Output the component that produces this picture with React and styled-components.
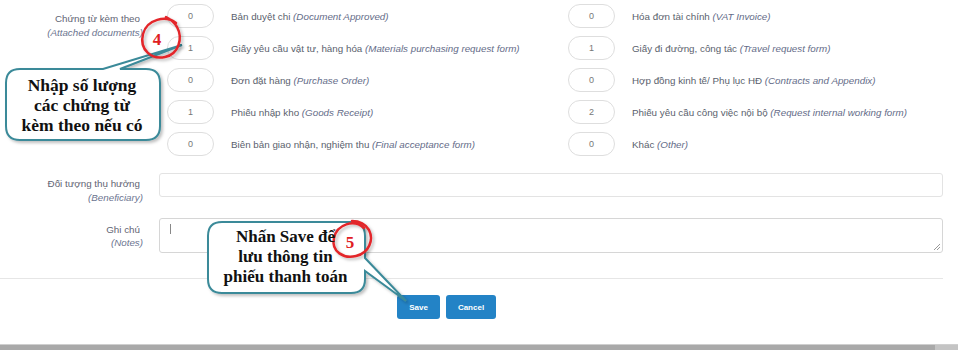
import React from "react";
import styled, { createGlobalStyle } from "styled-components";

const Global = createGlobalStyle`
  html, body { margin: 0; padding: 0; background: #fff; }
  body { font-family: "Liberation Sans", Arial, sans-serif; }
  * { box-sizing: border-box; }
`;

const Page = styled.div`
  position: relative;
  width: 958px;
  height: 350px;
  overflow: hidden;
  background: #fff;
`;

const Form = styled.div`
  padding: 4px 15px 0 0;
`;

const Row = styled.div`
  display: grid;
  grid-template-columns: 143px 1fr;
  column-gap: ${(p) => p.$gap || 16}px;
  margin-top: ${(p) => p.$top || 0}px;
  align-items: start;
`;

const FieldLabel = styled.div`
  text-align: right;
  font-size: 9.8px;
  line-height: ${(p) => p.$lh || 14}px;
  padding-top: ${(p) => p.$pt || 0}px;
  color: #5f6473;
  white-space: nowrap;
`;

const LabelMain = styled.div`
  padding-right: 3px;
`;

const LabelEn = styled.div`
  font-style: italic;
  color: #6c7590;
`;

const ItemsGrid = styled.div`
  display: grid;
  grid-template-columns: 401px 1fr;
  row-gap: 8px;
`;

const Item = styled.div`
  display: flex;
  align-items: center;
  gap: 17px;
`;

const Count = styled.input`
  width: 47px;
  height: 24px;
  border: 1px solid #dedede;
  border-radius: 12px;
  text-align: center;
  font-family: "Liberation Sans", Arial, sans-serif;
  font-size: 9px;
  color: #777;
  background: #fff;
  padding: 0;
  outline: none;
`;

const ItemText = styled.span`
  font-size: 9.8px;
  color: #5a5f6d;
  white-space: nowrap;
`;

const Em = styled.i`
  color: #646c88;
`;

const TextInput = styled.input`
  height: 24px;
  width: 100%;
  border: 1px solid #e3e3e3;
  border-radius: 3px;
  background: #fff;
  outline: none;
`;

const NotesBox = styled.div`
  position: relative;
  height: 35px;
  border: 1px solid #d6d6d6;
  border-radius: 3px;
  background: #fff;
  &::before {
    content: "";
    position: absolute;
    left: 10px;
    top: 5px;
    width: 1px;
    height: 10px;
    background: #888;
  }
  &::after {
    content: "";
    position: absolute;
    right: 2px;
    bottom: 2px;
    width: 6px;
    height: 6px;
    background: linear-gradient(135deg, transparent 45%, #999 45%, #999 55%, transparent 55%, transparent 70%, #999 70%, #999 80%, transparent 80%);
  }
`;

const Divider = styled.div`
  margin-top: 25px;
  width: 943px;
  border-top: 1px solid #e6e6e6;
`;

const Actions = styled.div`
  display: flex;
  gap: 6px;
  padding-left: 397px;
  margin-top: 16px;
`;

const Button = styled.button`
  width: ${(p) => p.$w}px;
  height: 24px;
  border: none;
  border-radius: 3px;
  background: #2383c6;
  color: #fff;
  font-family: "Liberation Sans", Arial, sans-serif;
  font-size: 8px;
  font-weight: bold;
  padding: 0;
`;

const BottomBar = styled.div`
  margin-top: 25px;
  height: 8px;
  background: linear-gradient(to right, #a9a9a9 0, #a9a9a9 935px, #c4c4c4 935px);
  border-top: 1px solid #cfcfcf;
`;

const Overlay = styled.svg`
  position: absolute;
  left: 0;
  top: 0;
  pointer-events: none;
`;

const CalloutText = styled.div`
  position: absolute;
  left: ${(p) => p.$x}px;
  top: ${(p) => p.$y}px;
  width: ${(p) => p.$w}px;
  text-align: center;
  font-family: "Liberation Serif", "Times New Roman", serif;
  font-weight: bold;
  font-size: ${(p) => p.$fs}px;
  line-height: 20px;
  color: #111;
  white-space: nowrap;
`;

const StepNum = styled.div`
  position: absolute;
  left: ${(p) => p.$x}px;
  top: ${(p) => p.$y}px;
  width: 20px;
  text-align: center;
  font-family: "Liberation Serif", "Times New Roman", serif;
  font-weight: bold;
  font-size: 17px;
  line-height: 18px;
  color: #e0201f;
`;

const items = [
  ["0", "Bản duyệt chi ", "(Document Approved)"],
  ["0", "Hóa đơn tài chính ", "(VAT Invoice)"],
  ["1", "Giấy yêu cầu vật tư, hàng hóa ", "(Materials purchasing request form)"],
  ["1", "Giấy đi đường, công tác ", "(Travel request form)"],
  ["0", "Đơn đặt hàng ", "(Purchase Order)"],
  ["0", "Hợp đồng kinh tế/ Phụ lục HĐ ", "(Contracts and Appendix)"],
  ["1", "Phiếu nhập kho ", "(Goods Receipt)"],
  ["2", "Phiếu yêu cầu công việc nội bộ ", "(Request internal working form)"],
  ["0", "Biên bản giao nhận, nghiệm thu ", "(Final acceptance form)"],
  ["0", "Khác ", "(Other)"],
];

export default function App() {
  return (
    <Page>
      <Global />
      <Form>
        <Row $gap={24}>
          <FieldLabel $pt={8}>
            <LabelMain>Chứng từ kèm theo</LabelMain>
            <LabelEn>(Attached documents)</LabelEn>
          </FieldLabel>
          <ItemsGrid>
            {items.map(([v, vi, en], i) => (
              <Item key={i}>
                <Count readOnly value={v} />
                <ItemText>
                  {vi}
                  <Em>{en}</Em>
                </ItemText>
              </Item>
            ))}
          </ItemsGrid>
        </Row>
        <Row $top={17}>
          <FieldLabel $pt={4}>
            <LabelMain>Đối tượng thụ hưởng</LabelMain>
            <LabelEn>(Beneficiary)</LabelEn>
          </FieldLabel>
          <TextInput readOnly />
        </Row>
        <Row $top={13}>
          <FieldLabel $pt={5} $lh={13}>
            <LabelMain>Ghi chú</LabelMain>
            <LabelEn>(Notes)</LabelEn>
          </FieldLabel>
          <NotesBox />
        </Row>
      </Form>
      <Divider />
      <Actions>
        <Button $w={43}>Save</Button>
        <Button $w={50}>Cancel</Button>
      </Actions>
      <BottomBar />

      <Overlay width="958" height="350" viewBox="0 0 958 350">
        <defs>
          <filter id="sh" x="-20%" y="-20%" width="150%" height="150%">
            <feDropShadow dx="2" dy="2" stdDeviation="1.5" floodColor="#000" floodOpacity="0.25" />
          </filter>
        </defs>
        <path
          d="M 20 69 L 103 69 L 182 45 L 120 69 L 146 69 Q 160 69 160 83 L 160 126 Q 160 140 146 140 L 20 140 Q 6 140 6 126 L 6 83 Q 6 69 20 69 Z"
          fill="#fff"
          stroke="#3b8a99"
          strokeWidth="2"
          filter="url(#sh)"
        />
        <path
          d="M 222 222 L 351 222 Q 365 222 365 236 L 365 258 L 406 301 L 365 271 L 365 279 Q 365 293 351 293 L 222 293 Q 208 293 208 279 L 208 236 Q 208 222 222 222 Z"
          fill="#fff"
          stroke="#3b8a99"
          strokeWidth="2"
          filter="url(#sh)"
        />
        <path
          d="M 176 23 C 166 15, 147 19, 143 34 C 139 50, 152 60, 165 57 C 179 54, 183 38, 177 27 C 174 22, 170 19, 166 17"
          fill="none"
          stroke="#e3262a"
          strokeWidth="2.5"
          strokeLinecap="round"
          filter="url(#sh)"
        />
        <path
          d="M 364 228 C 354 219, 337 224, 334 238 C 331 252, 344 259, 356 256 C 369 253, 374 240, 369 230 C 366 225, 360 221, 352 221"
          fill="none"
          stroke="#e3262a"
          strokeWidth="2.5"
          strokeLinecap="round"
          filter="url(#sh)"
        />
      </Overlay>
      <CalloutText $x={5} $y={75} $w={154} $fs={17.5}>
        Nhập số lượng
        <br />
        các chứng từ
        <br />
        kèm theo nếu có
      </CalloutText>
      <CalloutText $x={207} $y={227} $w={157} $fs={17}>
        Nhấn Save để
        <br />
        lưu thông tin
        <br />
        phiếu thanh toán
      </CalloutText>
      <StepNum $x={147} $y={31}>4</StepNum>
      <StepNum $x={340} $y={234}>5</StepNum>
    </Page>
  );
}
